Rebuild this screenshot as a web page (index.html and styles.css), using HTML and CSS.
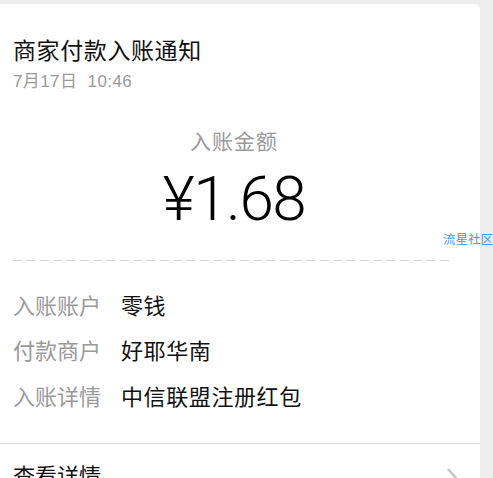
FILE: index.html
```html
<!DOCTYPE html>
<html lang="zh-CN">
<head>
    <meta charset="UTF-8">
    <meta name="viewport" content="width=device-width, initial-scale=1.0">
    <title>商家付款入账通知</title>
    <link rel="stylesheet" href="styles.css">
</head>
<body>
    <div class="card">
        <div class="head">
            <h1>商家付款入账通知</h1>
            <p class="date">7月17日&nbsp;&nbsp;10:46</p>
        </div>

        <div class="amount">
            <p class="amount-label">入账金额</p>
            <p class="amount-value">¥1.68</p>
        </div>

        <div class="dash"></div>

        <div class="rows">
            <div class="row">
                <span class="label">入账账户</span>
                <span class="value">零钱</span>
            </div>
            <div class="row">
                <span class="label">付款商户</span>
                <span class="value">好耶华南</span>
            </div>
            <div class="row">
                <span class="label">入账详情</span>
                <span class="value">中信联盟注册红包</span>
            </div>
        </div>

        <div class="more">
            <span>查看详情</span>
            <svg class="arrow" width="14" height="24" viewBox="0 0 14 24">
                <path d="M2 2 L11 12 L2 22" fill="none" stroke="#c4c4c4" stroke-width="2.4"/>
            </svg>
        </div>
    </div>
    <span class="mark">流星社区</span>
</body>
</html>
```

FILE: styles.css
```css
body {
    margin: 0;
    padding: 0;
    background: #ededed;
    font-family: "Liberation Sans", "Noto Sans CJK SC", sans-serif;
    color: #1a1a1a;
    height: 478px;
    overflow: hidden;
    position: relative;
}
p {
    margin: 0;
}
.card {
    margin-top: 4px;
    width: 480px;
    background: #fff;
    border-radius: 0 6px 0 0;
    min-height: 480px;
}
.head {
    padding: 32px 13px 0;
}
h1 {
    margin: 0;
    font-size: 23px;
    font-weight: normal;
    line-height: 30px;
    letter-spacing: 0.6px;
    color: #111;
}
.date {
    margin-top: 6px;
    font-size: 17px;
    line-height: 20px;
    color: #9a9a9a;
    letter-spacing: 0.4px;
}
.amount {
    text-align: center;
    padding: 37px 12px 0 0;
}
.amount-label {
    font-size: 21px;
    line-height: 26px;
    color: #9a9a9a;
    letter-spacing: 1px;
}
.amount-value {
    margin-top: 6px;
    font-family: "Roboto", "Liberation Sans", sans-serif;
    font-weight: 300;
    font-size: 62px;
    line-height: 76px;
    letter-spacing: -1.5px;
    color: #000;
}
.dash {
    margin: 23px 0 0 13px;
    width: 440px;
    height: 1px;
    background: repeating-linear-gradient(to right, #d6d6d6 0 9px, transparent 9px 13.33px);
}
.rows {
    padding: 20px 13px 0;
}
.row {
    display: flex;
    align-items: center;
    height: 45.5px;
    font-size: 22px;
}
.label {
    width: 108px;
    color: #9a9a9a;
}
.value {
    color: #111;
    letter-spacing: 0.6px;
}
.more {
    margin-top: 25px;
    border-top: 1px solid #dcdcdc;
    display: flex;
    justify-content: space-between;
    align-items: center;
    padding: 13px 20px 0 13px;
    font-size: 22px;
    color: #111;
}
.arrow {
    margin-top: 10px;
}
.mark {
    position: absolute;
    left: 443px;
    top: 229px;
    font-size: 12.5px;
    color: #3b9cf0;
    white-space: nowrap;
}
```
